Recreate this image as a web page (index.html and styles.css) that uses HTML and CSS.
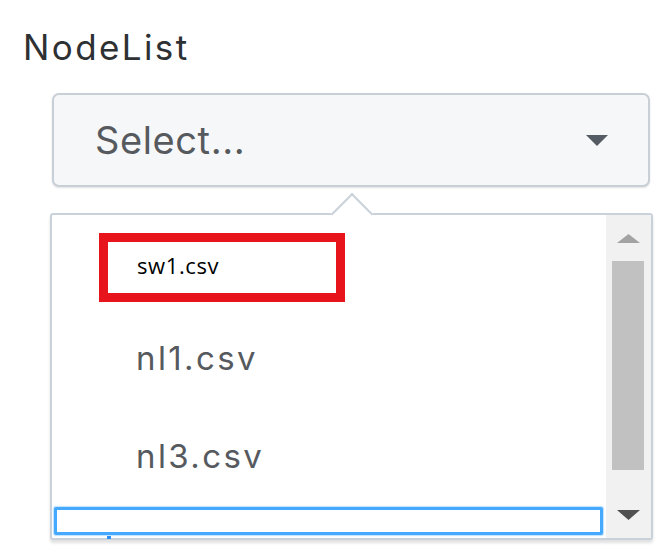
FILE: index.html
```html
<!DOCTYPE html>
<html lang="en">
<head>
<meta charset="utf-8">
<title>NodeList</title>
<link rel="stylesheet" href="styles.css">
</head>
<body>
<div class="page">
  <div class="label">NodeList</div>
  <div class="select">
    <span class="select-text">Select...</span>
    <svg class="caret" width="22" height="11" viewBox="0 0 22 11"><path d="M0 0 L22 0 L11 11 Z" fill="#565c63"/></svg>
  </div>
  <div class="popup">
    <div class="list">
      <div class="item-first">
        <div class="highlight"><span class="hl-text">sw1.csv</span></div>
      </div>
      <div class="item item-2">nl1.csv</div>
      <div class="item item-3">nl3.csv</div>
      <div class="search"></div>
    </div>
    <div class="scrollbar">
      <div class="sb-btn"><svg width="23" height="9" viewBox="0 0 23 9"><path d="M11.5 0 L23 9 L0 9 Z" fill="#a3a3a3"/></svg></div>
      <div class="sb-thumb"></div>
      <div class="sb-space"></div>
      <div class="sb-btn"><svg width="23" height="10" viewBox="0 0 23 10"><path d="M0 0 L23 0 L11.5 10 Z" fill="#505050"/></svg></div>
    </div>
  </div>
</div>
</body>
</html>
```
FILE: styles.css
```css
html, body {
  margin: 0;
  padding: 0;
  background: #ffffff;
}
body {
  font-family: Inter, "Noto Sans", sans-serif;
  width: 669px;
  height: 549px;
  overflow: hidden;
}
.page {
  padding: 30px 0 0 22px;
  display: flex;
  flex-direction: column;
  align-items: flex-start;
}
.label {
  font-size: 35px;
  line-height: 35px;
  color: #2e3133;
  letter-spacing: 2.4px;
  padding-left: 1px;
}
.select {
  margin-top: 28px;
  margin-left: 30px;
  box-sizing: border-box;
  width: 598px;
  height: 94px;
  border: 2px solid #c8cfd7;
  border-radius: 7px;
  background: #f6f7f9;
  box-shadow: 0 1px 2px rgba(0, 0, 0, 0.12);
  display: flex;
  align-items: center;
  justify-content: space-between;
  padding: 0 40px 0 41px;
}
.select-text {
  font-size: 38px;
  line-height: 38px;
  color: #565a5e;
  letter-spacing: 0.6px;
}
.caret {
  display: block;
}
.popup {
  position: relative;
  margin-top: 26px;
  margin-left: 28px;
  box-sizing: border-box;
  width: 603px;
  height: 327px;
  border: 2px solid #c9d1da;
  border-radius: 3px;
  background: #ffffff;
  box-shadow: 0 3px 3px rgba(0, 0, 0, 0.12);
  display: flex;
}
.popup::before {
  content: "";
  position: absolute;
  left: 285px;
  top: -16px;
  width: 30px;
  height: 30px;
  box-sizing: border-box;
  background: #ffffff;
  border-top: 2px solid #c9d1da;
  border-left: 2px solid #c9d1da;
  transform: rotate(45deg);
}
.list {
  position: relative;
  flex: 1;
  display: flex;
  flex-direction: column;
  align-items: flex-start;
}
.item-first {
  padding-top: 18px;
  padding-left: 47px;
}
.highlight {
  position: relative;
  box-sizing: border-box;
  width: 246px;
  height: 69px;
  border: 9px solid #e8141c;
  background: #ffffff;
  display: flex;
  align-items: center;
  padding: 0 0 6px 29px;
}
.hl-text {
  font-family: "Open Sans", "Liberation Sans", sans-serif;
  font-size: 22px;
  line-height: 22px;
  color: #000000;
  letter-spacing: 0.6px;
}
.item {
  font-size: 33px;
  line-height: 33px;
  color: #565a5e;
  padding-left: 84px;
  letter-spacing: 2.4px;
}
.item-2 {
  margin-top: 40px;
}
.item-3 {
  margin-top: 65px;
}
.search {
  position: relative;
  margin-top: auto;
  margin-left: 2px;
  margin-bottom: 3px;
  box-sizing: border-box;
  width: 549px;
  height: 28px;
  border: 3px solid #45aaff;
  border-radius: 2px;
  background: #ffffff;
  box-shadow: 0 0 1px 1px rgba(69, 170, 255, 0.35);
}
.search::after {
  content: "";
  position: absolute;
  left: 50px;
  bottom: -7px;
  width: 4px;
  height: 3px;
  background: #2f8ff0;
}
.scrollbar {
  width: 45px;
  background: #f1f1f1;
  display: flex;
  flex-direction: column;
}
.sb-btn {
  height: 46px;
  display: flex;
  align-items: center;
  justify-content: center;
}
.sb-btn svg {
  display: block;
}
.sb-thumb {
  height: 209px;
  margin: 0 7px 0 6px;
  background: #c1c1c1;
}
.sb-space {
  flex: 1;
}
```
